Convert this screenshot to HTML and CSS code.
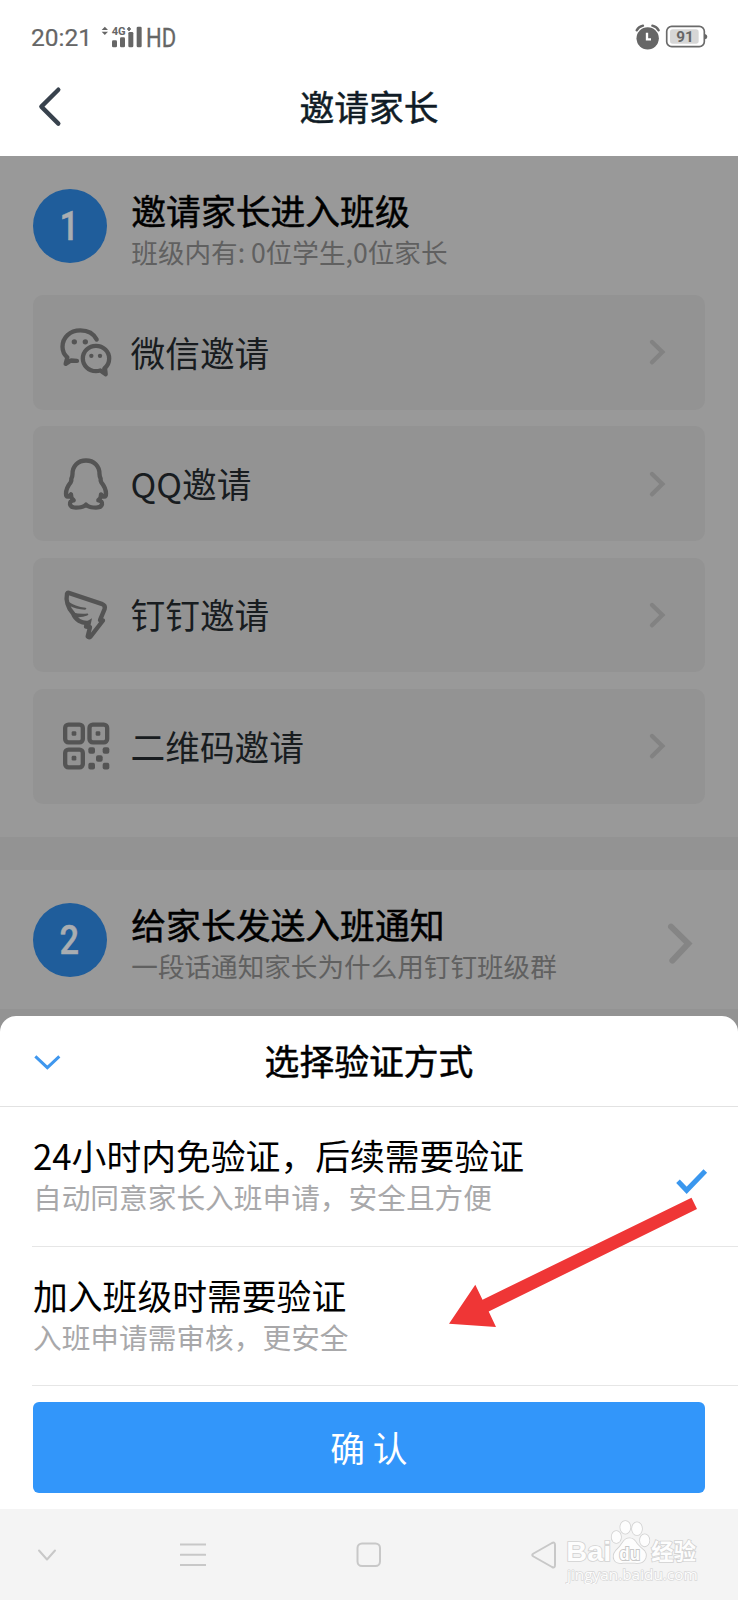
FILE: index.html
```html
<!DOCTYPE html>
<html lang="zh-CN">
<head>
<meta charset="utf-8">
<title>邀请家长</title>
<link rel="stylesheet" href="styles.css">
</head>
<body>
<div class="screen">
  <header class="top">
    <div class="status">
      <span class="clock">20:21</span>
      <svg class="signal" viewBox="303 78 123 66" width="41" height="22">
        <path d="M305 90L314.500 80L324 90ZM305 95L314.500 105L324 95Z" fill="#666"/>
        <text x="335" y="104" class="net" textLength="42" lengthAdjust="spacingAndGlyphs">4G</text>
        <path d="M381 87h12M387 81v12" stroke="#666" stroke-width="5"/>
        <g fill="#666"><rect x="336" y="121" width="15" height="21" rx="4"/><rect x="360" y="112" width="15" height="30" rx="4"/><rect x="385" y="96" width="15" height="46" rx="4"/><rect x="410" y="80" width="15" height="62" rx="4"/></g>
      </svg>
      <span class="hd">HD</span>
      <svg class="alarm" viewBox="802 70 78 78" width="26" height="26">
        <circle cx="840" cy="113" r="33.500" fill="#666"/>
        <path d="M807 89Q813 78 826 75M854 75Q867 78 873 89" fill="none" stroke="#666" stroke-width="7" stroke-linecap="round"/>
        <path d="M838 96v20h12" fill="none" stroke="#fff" stroke-width="7"/>
      </svg>
      <svg class="battery" viewBox="892 76 128 70" width="42.700" height="23.300">
        <rect x="897" y="80" width="113" height="61" rx="15" fill="none" stroke="#6a6a6a" stroke-width="5"/>
        <rect x="907" y="89" width="86" height="43" rx="8" fill="#d6d6d6"/>
        <path d="M1012 103q7 2 7 8t-7 8z" fill="#666"/>
        <text x="952" y="127" class="level" text-anchor="middle">91</text>
      </svg>
    </div>
    <div class="navbar">
      <svg class="back" viewBox="111 255 78 130" width="26" height="43.300"><path d="M175 269L124 320L175 371" fill="none" stroke="#38424d" stroke-width="13" stroke-linecap="round" stroke-linejoin="round"/></svg>
      <h1 class="page-title">邀请家长</h1>
    </div>
  </header>

  <main class="content">
    <section class="step step-one">
      <div class="step-head">
        <div class="num"><span>1</span></div>
        <div class="step-text"><h2>邀请家长进入班级</h2><p>班级内有: 0位学生,0位家长</p></div>
      </div>
      <div class="cards">
        <div class="card">
          <svg class="icon" viewBox="171 490.500 174 174">
            <g class="line"><path d="M290 540C281 522 262 512.500 241 512.500C210 512.500 187.500 534 187.500 562C187.500 576 194 587 202 594L197 613L213 603L231 604"/><path d="M313 627C322 620 327.500 609 327.500 597C327.500 576 310 559 288 559C266 559 248.500 576 248.500 597C248.500 618 266 635 288 635Q294 635 301 633L317 644L315 626"/></g>
            <g class="fill"><circle cx="223" cy="547" r="8"/><circle cx="256" cy="547" r="8"/><circle cx="274" cy="589" r="6.500"/><circle cx="300" cy="589" r="6.500"/></g>
          </svg>
          <span class="label">微信邀请</span>
          <svg class="chev" viewBox="264 174 56 84" width="18.700" height="28"><path d="M276 186L307 216L276 247"/></svg>
        </div>
        <div class="card">
          <svg class="icon" viewBox="171 134 174 174">
            <path class="line" d="M258 150.500C234 150.500 217.500 167 217.500 191Q217.500 198 214 205Q215 210 212 216C203 227 198 240 198 250Q198 260 204 259Q209 257 213 252Q212 263 221 270Q208 272 210 282Q213 292 228 292Q250 292 258 283Q266 292 288 292Q303 292 306 282Q308 272 295 270Q304 263 303 252Q307 257 312 259Q318 260 318 250C318 240 313 227 304 216Q301 210 302 205Q298.500 198 298.500 191C298.500 167 282 150.500 258 150.500Z"/>
          </svg>
          <span class="label">QQ邀请</span>
          <svg class="chev" viewBox="264 174 56 84" width="18.700" height="28"><path d="M276 186L307 216L276 247"/></svg>
        </div>
        <div class="card">
          <svg class="icon" viewBox="171 528.500 174 174">
            <path class="line" d="M206 549L305 582Q317 587 314 597L300 631L309 632L272 680Q267 684 263 680L270 652L258 650L264 639C245 641 226 630 219 611C203 594 197 570 201 552Q203 548 206 549Z"/>
            <path class="fill" d="M203 574Q225 589 257 594Q262 597 255 600Q228 598 207 587ZM217 607Q240 614 263 611Q268 614 262 617Q244 624 223 621ZM250 641L276 625L270 653L257 650Z"/>
          </svg>
          <span class="label">钉钉邀请</span>
          <svg class="chev" viewBox="264 174 56 84" width="18.700" height="28"><path d="M276 186L307 216L276 247"/></svg>
        </div>
        <div class="card">
          <svg class="icon" viewBox="171 922.500 174 174">
            <g class="line"><rect x="195.500" y="945.500" width="53" height="53" rx="10"/><rect x="268.500" y="945.500" width="53" height="53" rx="10"/><rect x="195.500" y="1020.500" width="53" height="53" rx="10"/></g>
            <g class="fill"><rect x="215" y="965" width="14" height="14" rx="4"/><rect x="287" y="965" width="14" height="14" rx="4"/><rect x="215" y="1039" width="14" height="14" rx="4"/><rect x="265" y="1013" width="20" height="20" rx="6"/><rect x="308" y="1013" width="20" height="20" rx="6"/><rect x="288" y="1037" width="20" height="20" rx="6"/><rect x="265" y="1060" width="20" height="20" rx="6"/><rect x="308" y="1060" width="20" height="20" rx="6"/></g>
          </svg>
          <span class="label">二维码邀请</span>
          <svg class="chev" viewBox="264 174 56 84" width="18.700" height="28"><path d="M276 186L307 216L276 247"/></svg>
        </div>
      </div>
    </section>
    <section class="step step-two">
      <div class="step-head">
        <div class="num"><span>2</span></div>
        <div class="step-text"><h2>给家长发送入班通知</h2><p>一段话通知家长为什么用钉钉班级群</p></div>
        <svg class="chev big" viewBox="896 366 84 130" width="28" height="43.300"><path d="M911 380L963 431L915 482"/></svg>
      </div>
    </section>
  </main>

  <section class="sheet">
    <div class="sheet-head">
      <svg class="collapse" viewBox="100 760 86 54" width="28.700" height="18"><path d="M107 770L143 804L179 770" fill="none" stroke="#3f97ee" stroke-width="9"/></svg>
      <h2 class="sheet-title">选择验证方式</h2>
    </div>
    <div class="option">
      <div><h3>24小时内免验证，后续需要验证</h3><p>自动同意家长入班申请，安全且方便</p></div>
      <svg class="check" viewBox="766 82 100 80" width="33.300" height="26.700"><path d="M775 122L801 149L857 91" fill="none" stroke="#3a97ee" stroke-width="15"/></svg>
    </div>
    <div class="option">
      <div><h3>加入班级时需要验证</h3><p>入班申请需审核，更安全</p></div>
    </div>
    <button class="confirm">确 认</button>
    <svg class="arrow" viewBox="448 1196 250 133" width="250" height="133"><path d="M449 1323.700L475.300 1284.700L482.500 1299.700L691.500 1197.700L697 1209L488.700 1311.500L496 1327Z" fill="#ef3636"/></svg>
  </section>

  <footer class="system">
    <svg width="20" height="14" viewBox="0 0 20 14"><path d="M2 2.500L10 11.500L18 2.500"/></svg>
    <svg width="26" height="24" viewBox="0 0 26 24"><path d="M.5 1.500h25M.5 11.800h25M.5 22h25"/></svg>
    <svg width="26" height="26" viewBox="0 0 26 26"><rect x="1.500" y="1.500" width="22.500" height="22.500" rx="4.500"/></svg>
    <svg width="26" height="28" viewBox="0 0 26 28"><path d="M2.500 12.500L21 2Q24 .5 24 4V24Q24 27.500 21 26L2.500 15.500Q0 14 2.500 12.500Z"/></svg>
    <svg class="brand" viewBox="195 115 405 195" width="135" height="65">
      <g class="brand-ink">
        <text x="199" y="242" font-size="84" textLength="135" lengthAdjust="spacingAndGlyphs">Bai</text>
        <ellipse cx="349" cy="169" rx="14" ry="18"/><ellipse cx="376" cy="140" rx="15" ry="19"/><ellipse cx="411" cy="144" rx="15" ry="19"/><ellipse cx="434" cy="179" rx="14" ry="18"/>
        <path d="M389 173Q402 173 411 190Q422 202 433 211Q443 224 433 238Q425 249 405 246H369Q350 250 343 237Q337 223 348 210Q360 199 368 186Q376 173 389 173Z"/>
        <text x="358" y="237" font-size="56" class="du" textLength="62" lengthAdjust="spacingAndGlyphs">du</text>
        <text x="454" y="237" font-size="67" class="cjk">经验</text>
        <text x="201" y="297" font-size="42" class="url" textLength="392" lengthAdjust="spacingAndGlyphs">jingyan.baidu.com</text>
      </g>
    </svg>
  </footer>
</div>
</body>
</html>
```

FILE: styles.css
```css
* { box-sizing: border-box; }
body, h1, h2, h3, p { margin: 0; }
body { width: 738px; background: #fff; font-family: "Noto Sans CJK SC", sans-serif; }
h1, h2, h3 { font-size: 34.8px; line-height: 44px; font-weight: 400; white-space: nowrap; }
h1, h2 { -webkit-text-stroke: .5px currentColor; }
p { white-space: nowrap; font-weight: 400; }
svg { display: block; flex: none; }

.screen { width: 738px; height: 1600px; display: flex; flex-direction: column; overflow: hidden; }

.top { height: 156px; flex: none; background: #fff; }
.status { height: 58px; padding: 16px 30px 0 31px; display: flex; align-items: center; font-family: Roboto, sans-serif; color: #666; }
.clock { font-size: 24.5px; line-height: 42px; width: 70px; padding-top: 2px; -webkit-text-stroke: .2px currentColor; }
.signal { margin-top: -1px; }
.net { font: bold 34px Roboto, sans-serif; fill: #666; }
.hd { font-size: 25px; line-height: 42px; margin-left: 4px; padding-top: 3px; display: inline-block; transform: scaleX(.88); transform-origin: left; -webkit-text-stroke: .3px currentColor; }
.alarm { margin-left: auto; margin-right: 4px; margin-top: -1px; }
.battery { margin-right: 0; }
.level { font: 700 46px Roboto, sans-serif; fill: #666; }
.navbar { height: 98px; display: grid; grid-template-columns: 90px 1fr 90px; align-items: center; }
.back { margin: 0 0 0 37px; }
.page-title { text-align: center; color: #101c26; margin-top: -2px; }

.content { height: 860px; flex: none; background: #939393; }
.step { background: #999; padding: 0 33px; }
.step-one { height: 681px; }
.step-two { height: 139px; margin-top: 33px; }
.step-head { display: flex; height: 139px; padding-top: 32.500px; align-items: flex-start; }
.num { flex: none; width: 74px; height: 74px; margin-left: -.5px; border-radius: 50%; background: #1f5d9b; color: #a9adb1; display: flex; align-items: center; justify-content: center; font: 500 40px/74px Roboto, sans-serif; -webkit-text-stroke: .5px currentColor; }
.num span { display: inline-block; transform: translate(0, .5px) scaleX(.86); }
.step-text { margin: -1px 0 0 24.800px; }
.step-text h2 { color: #000; }
.step-text p { font-size: 26.6px; line-height: 38px; margin-top: 1px; color: #606060; }
.big { margin: 19px 11px 0 auto; }

.cards { display: flex; flex-direction: column; gap: 16.500px; }
.card { height: 114.800px; border-radius: 10px; background: #939393; display: flex; align-items: center; padding: 0 38px 0 24px; }
.icon { width: 58px; height: 58px; }
.line { fill: none; stroke: #545454; stroke-width: 13; stroke-linecap: round; stroke-linejoin: round; }
.fill { fill: #545454; }
.label { font-size: 34.7px; line-height: 44px; margin: -1px 0 0 15.500px; color: #181c1f; font-weight: 400; }
.chev { margin-left: auto; }
.chev path { fill: none; stroke: #828282; stroke-width: 13; stroke-linecap: round; stroke-linejoin: miter; }
.chev.big path { stroke-width: 18; stroke: #858585; }

.sheet { position: relative; height: 493px; flex: none; background: #fff; border-radius: 16px 16px 0 0; box-shadow: 0 -7px 0 16px #939393; clip-path: inset(0); }
.sheet-head { height: 91px; border-bottom: 1px solid #e2e2e2; display: grid; grid-template-columns: 90px 1fr 90px; align-items: center; }
.collapse { margin: 2px 0 0 33px; }
.sheet-title { text-align: center; color: #000; margin-top: -2px; }
.option { margin-left: 32px; height: 139px; border-bottom: 1px solid #e6e6e6; display: flex; padding: 26px 30px 0 1px; }
.sheet-head + .option { height: 140px; }
.option h3 { color: #000; }
.option p { font-size: 28.7px; line-height: 40px; margin-top: 0; color: #a8a8aa; }
.check { margin: 34.500px 0 0 auto; }
.confirm { display: block; width: 672.500px; height: 90.500px; margin: 16px 0 0 32.500px; padding: 0; border: 0; border-radius: 6px; background: #3296fa; color: #fff; font: 400 34.7px/90px "Noto Sans CJK SC", sans-serif; }
.arrow { position: absolute; left: 448px; top: 180px; }

.system { position: relative; height: 91px; flex: none; background: #f4f4f4; display: flex; align-items: center; padding: 0 0 0 37px; }
.system > svg:not(.brand) { fill: none; stroke: #c8c8c8; stroke-width: 2; stroke-linecap: round; stroke-linejoin: round; }
.system > svg:nth-child(2) { margin-left: 123px; }
.system > svg:nth-child(3) { margin-left: 150px; }
.system > svg:nth-child(4) { margin-left: 149px; }
.brand { position: absolute; left: 565px; top: 9.500px; }
.brand-ink { fill: #fdfdfd; stroke: #d2d2d2; stroke-width: 5; paint-order: stroke; font-family: "Liberation Sans", sans-serif; font-weight: bold; }
.brand-ink .cjk { font-family: "Noto Sans CJK SC", sans-serif; }
.brand-ink .du { fill: #fdfdfd; stroke: #c8c8c8; stroke-width: 6; }
.brand-ink .url { font-family: "Open Sans", sans-serif; font-weight: 400; stroke: #d8d8d8; stroke-width: 4; }
```
